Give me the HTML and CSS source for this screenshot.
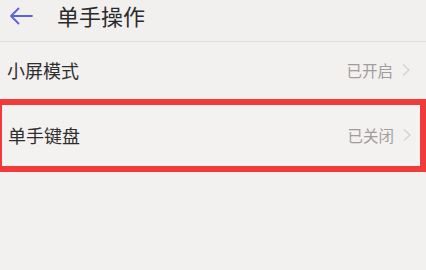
FILE: index.html
```html
<!DOCTYPE html>
<html lang="zh">
<head>
<meta charset="utf-8">
<link rel="stylesheet" href="styles.css">
</head>
<body>
<div class="screen">
  <header class="topbar">
    <svg class="back" width="24" height="18" viewBox="0 0 24 18">
      <path d="M23 9H2M9.5 1.5L2 9l7.5 7.5" fill="none" stroke="#5b63d8" stroke-width="1.8" stroke-linecap="round" stroke-linejoin="round"/>
    </svg>
    <h1 class="title">单手操作</h1>
  </header>
  <ul class="list">
    <li class="row">
      <span class="label">小屏模式</span>
      <span class="status">已开启<svg class="chev" width="10" height="14" viewBox="0 0 10 14"><path d="M2 1.5l6 5.5-6 5.5" fill="none" stroke="#d2cece" stroke-width="1.2"/></svg></span>
    </li>
    <li class="row highlighted">
      <span class="label">单手键盘</span>
      <span class="status">已关闭<svg class="chev" width="10" height="14" viewBox="0 0 10 14"><path d="M2 1.5l6 5.5-6 5.5" fill="none" stroke="#d2cece" stroke-width="1.2"/></svg></span>
    </li>
  </ul>
</div>
</body>
</html>
```

FILE: styles.css
```css
html, body {
  margin: 0;
  padding: 0;
}
body {
  width: 426px;
  height: 270px;
  overflow: hidden;
  background: #f3f0f0;
  font-family: "Noto Sans CJK SC", "Noto Sans", sans-serif;
}
.screen {
  width: 426px;
  height: 270px;
  background: #f3f0f0;
}
.topbar {
  height: 42px;
  display: flex;
  align-items: center;
  border-bottom: 1px solid #e2dede;
  box-sizing: border-box;
  padding-left: 9px;
  padding-bottom: 13px;
  padding-top: 1px;
  background: #f2efef;
}
.back {
  flex: none;
  margin-top: 3px;
}
.title {
  margin: 0 0 0 24px;
  font-size: 22px;
  font-weight: 400;
  color: #2b2b2b;
  line-height: 22px;
}
.list {
  list-style: none;
  margin: 0;
  padding: 0;
}
.row {
  height: 58px;
  display: flex;
  align-items: center;
  justify-content: space-between;
  box-sizing: border-box;
  padding: 0 15px 0 7px;
}
.row:first-child {
  height: 57px;
  padding-bottom: 2px;
}
.label {
  font-size: 18px;
  color: #2e2e2e;
}
.status {
  display: flex;
  align-items: center;
  font-size: 15.5px;
  color: #a19d9d;
}
.chev {
  margin-left: 8px;
}
.highlighted {
  height: 73px;
  margin-left: -4px;
  padding-left: 6px;
  padding-right: 8px;
  padding-bottom: 2px;
  border: 6px solid #f23a3a;
  background: #f4f1f1;
}
```
